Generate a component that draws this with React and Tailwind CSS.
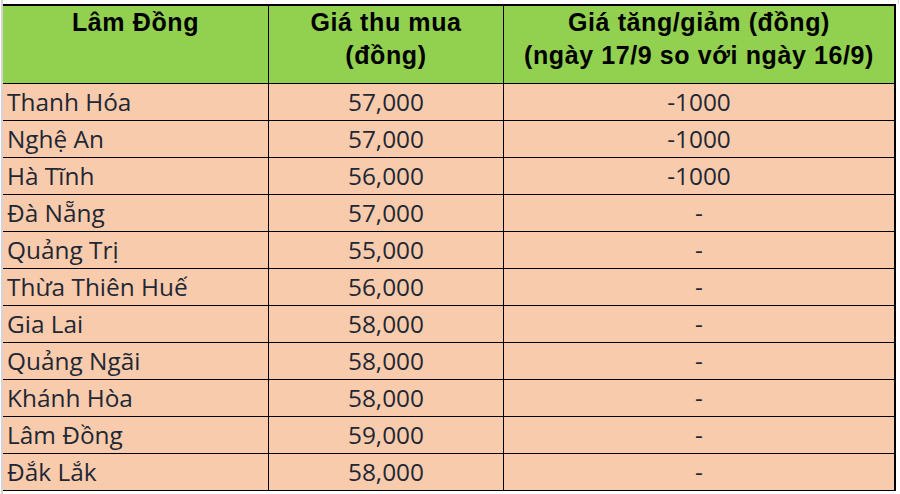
import React from "react";

const rows = [
  ["Thanh Hóa", "57,000", "-1000"],
  ["Nghệ An", "57,000", "-1000"],
  ["Hà Tĩnh", "56,000", "-1000"],
  ["Đà Nẵng", "57,000", "-"],
  ["Quảng Trị", "55,000", "-"],
  ["Thừa Thiên Huế", "56,000", "-"],
  ["Gia Lai", "58,000", "-"],
  ["Quảng Ngãi", "58,000", "-"],
  ["Khánh Hòa", "58,000", "-"],
  ["Lâm Đồng", "59,000", "-"],
  ["Đắk Lắk", "58,000", "-"],
];

const head = "font-['Liberation_Sans',Arial,sans-serif] font-bold text-[25px] tracking-[0.6px] leading-[33px] text-black text-center bg-[#92d050] border-b border-black h-[78px]";
const body = "font-['Open_Sans','Noto_Sans',sans-serif] text-[24.4px] text-[#1f2733] bg-[#f8cbad] border-b border-black h-[37px] flex items-center";

export default function App() {
  return (
    <div className="w-[900px] h-[494px] bg-white overflow-hidden flex">
      <div className="w-[3px] flex">
        <div className="w-[1px]" />
        <div className="w-[2px] bg-[#d4d4d4]" />
      </div>
      <div className="flex flex-col">
        <div className="h-[4px] flex">
          <div className="w-[893px]" />
          <div className="w-[2px]" />
          <div className="w-[1px] bg-[#d4d4d4]" />
        </div>
        <div className="border-t-2 border-black w-[893px] grid grid-cols-[266px_235px_392px]">
          <div className={`${head} border-r`}>Lâm Đồng</div>
          <div className={`${head} border-r`}>Giá thu mua<br />(đồng)</div>
          <div className={`${head} border-r-2`}>Giá tăng/giảm (đồng)<br />(ngày 17/9 so với ngày 16/9)</div>
          {rows.map((r, i) => (
            <React.Fragment key={i}>
              <div className={`${body} border-r pl-[4px]`}>{r[0]}</div>
              <div className={`${body} border-r justify-center`}>{r[1]}</div>
              <div className={`${body} border-r-2 justify-center`}>{r[2]}</div>
            </React.Fragment>
          ))}
        </div>
      </div>
    </div>
  );
}
